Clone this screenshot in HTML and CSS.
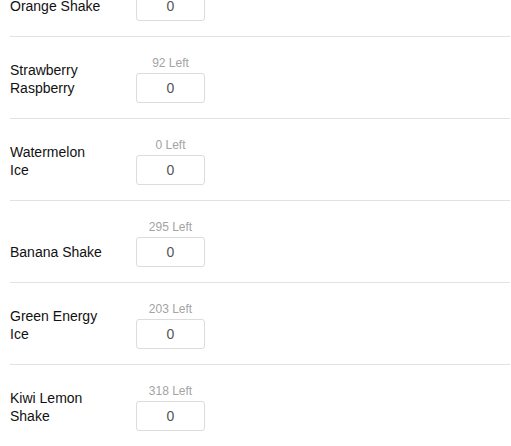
FILE: index.html
```html
<!DOCTYPE html>
<html lang="en">
<head>
<meta charset="utf-8">
<title>Flavors</title>
<link rel="stylesheet" href="styles.css">
</head>
<body>
<div class="list">
  <div class="row">
    <div class="name">Orange Shake</div>
    <div class="qty"><div class="left">100 Left</div><input class="box" type="text" value="0"></div>
  </div>
  <div class="row">
    <div class="name">Strawberry Raspberry</div>
    <div class="qty"><div class="left">92 Left</div><input class="box" type="text" value="0"></div>
  </div>
  <div class="row">
    <div class="name">Watermelon Ice</div>
    <div class="qty"><div class="left">0 Left</div><input class="box" type="text" value="0"></div>
  </div>
  <div class="row">
    <div class="name">Banana Shake</div>
    <div class="qty"><div class="left">295 Left</div><input class="box" type="text" value="0"></div>
  </div>
  <div class="row">
    <div class="name">Green Energy Ice</div>
    <div class="qty"><div class="left">203 Left</div><input class="box" type="text" value="0"></div>
  </div>
  <div class="row">
    <div class="name">Kiwi Lemon Shake</div>
    <div class="qty"><div class="left">318 Left</div><input class="box" type="text" value="0"></div>
  </div>
</div>
</body>
</html>
```

FILE: styles.css
```css
html, body {
  margin: 0;
  padding: 0;
  background: #fff;
  overflow: hidden;
}
body {
  font-family: "Liberation Sans", Arial, sans-serif;
  color: #111;
}
.list {
  margin: -45px 1px 0 10px;
}
.row {
  display: flex;
  align-items: flex-end;
  padding: 17px 0 15px 0;
  border-bottom: 1px solid #e2e2e2;
}
.name {
  width: 94px;
  margin-right: 32px;
  font-size: 14px;
  line-height: 18px;
  margin-bottom: 6px;
}
.qty {
  display: flex;
  flex-direction: column;
  align-items: center;
  width: 69px;
}
.left {
  font-size: 12px;
  line-height: 18px;
  color: #a3a3a3;
  margin-bottom: 1px;
  white-space: nowrap;
}
.box {
  box-sizing: border-box;
  width: 69px;
  height: 30px;
  margin: 0;
  padding: 0;
  border: 1px solid #dcdcdc;
  border-radius: 3px;
  text-align: center;
  font-family: "Liberation Sans", Arial, sans-serif;
  font-size: 14px;
  color: #555;
  background: #fff;
  outline: none;
}
```
